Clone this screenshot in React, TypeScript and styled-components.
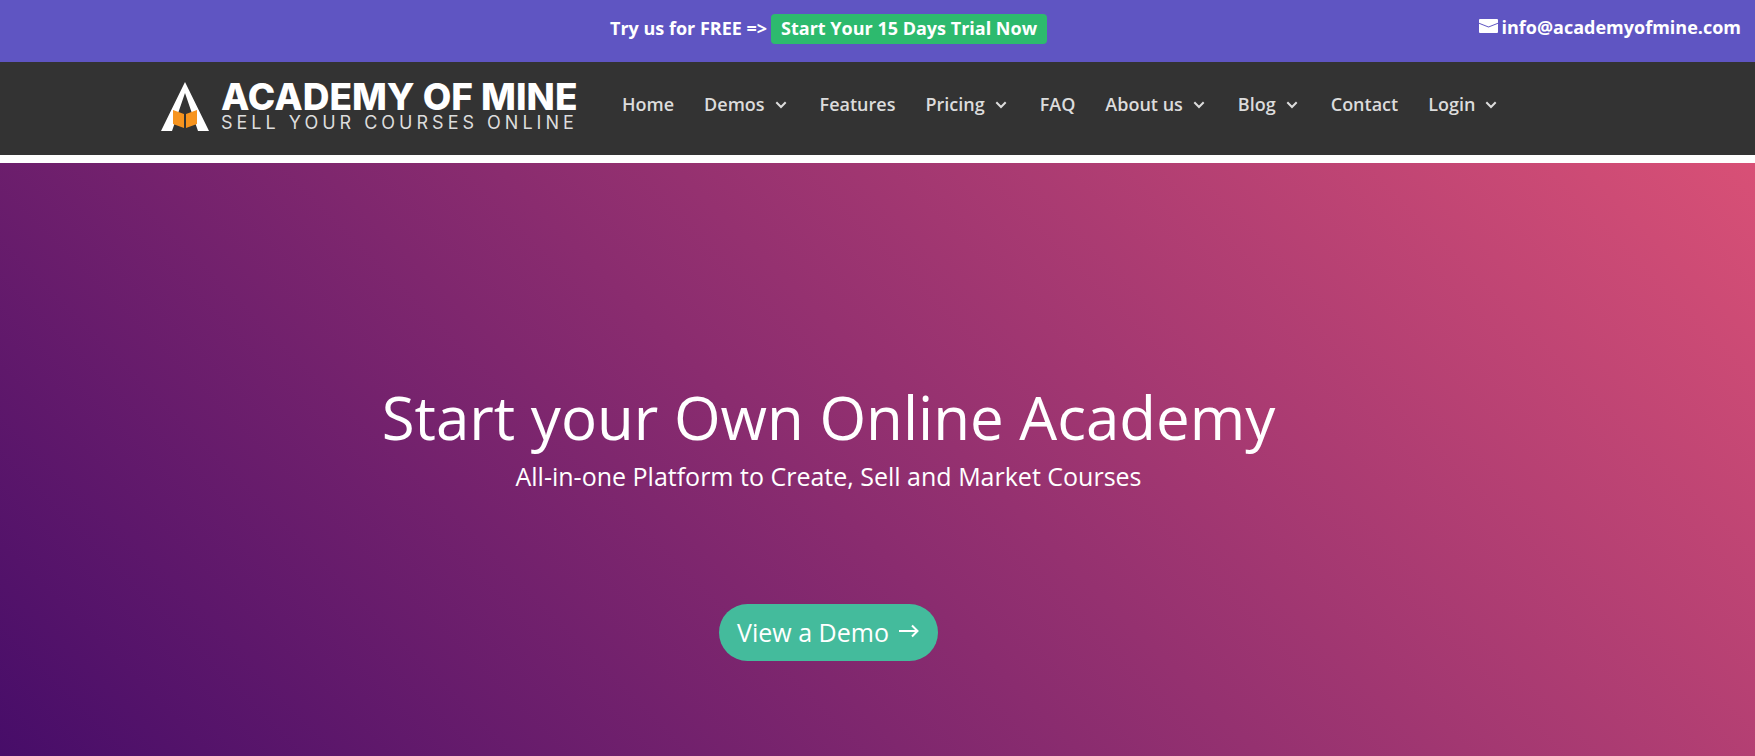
import React from "react";
import styled, { createGlobalStyle } from "styled-components";

const GlobalStyle = createGlobalStyle`
  * { box-sizing: border-box; }
  html, body, #root { height: 100%; }
  body {
    margin: 0;
    background: #fff;
    color: #fff;
    font-family: "Open Sans", "Liberation Sans", sans-serif;
  }
  a { color: inherit; text-decoration: none; }
`;

const Page = styled.div`
  display: flex;
  flex-direction: column;
  min-height: 100%;
`;

const TopBar = styled.div`
  display: grid;
  grid-template-columns: 1fr auto 1fr;
  align-items: start;
  padding: 14px 14px 18px 0;
  background: #5f55c2;
  font-size: 18px;
  font-weight: 700;
`;

const Promo = styled.p`
  grid-column: 2;
  display: flex;
  gap: 4px;
  margin: 0 84px 0 0;
  line-height: 28px;
`;

const TrialLink = styled.a`
  padding: 0 10px 2px;
  border-radius: 4px;
  background: #2dba6e;
`;

const MailLink = styled.a`
  display: flex;
  align-items: center;
  justify-content: flex-end;
  gap: 4px;
  line-height: 26px;
`;

const MailIcon = styled.svg`
  margin-bottom: 2px;
`;

const Header = styled.header`
  display: flex;
  gap: 46px;
  min-height: 93px;
  padding: 20px 0 0 161px;
  background: #333;
`;

const Logo = styled.a`
  display: flex;
  flex: none;
  gap: 12px;
`;

const Wordmark = styled.span`
  display: flex;
  flex-direction: column;
  width: 355px;
  font-family: Inter, "Liberation Sans", sans-serif;
  white-space: nowrap;
`;

const BrandName = styled.span`
  font-size: 37px;
  font-weight: 800;
  line-height: 30px;
`;

const Tagline = styled.span`
  color: #ddd;
  font-size: 18px;
  line-height: 22px;
  letter-spacing: 4px;
`;

const Menu = styled.ul`
  display: flex;
  gap: 30px;
  margin: 0;
  padding: 8px 0 0;
  list-style: none;
`;

const MenuLink = styled.a`
  display: flex;
  align-items: center;
  gap: 10px;
  color: #dcdcdc;
  font-size: 18px;
  font-weight: 600;
  line-height: 28px;
  white-space: nowrap;
`;

const ChevronSvg = styled.svg`
  margin: 2px 3px 0 0;
`;

const Hero = styled.main`
  display: flex;
  flex: 1;
  flex-direction: column;
  align-items: center;
  margin-top: 8px;
  padding: 212px 98px 95px 0;
  background: linear-gradient(45deg, #470d69 0%, #d85076 100%);
`;

const Title = styled.h1`
  margin: 0;
  font-size: 60px;
  font-weight: 400;
  line-height: 84px;
`;

const Subtitle = styled.p`
  margin: 0;
  font-size: 25px;
  line-height: 34px;
`;

const DemoLink = styled.a`
  display: flex;
  align-items: center;
  gap: 10px;
  margin-top: 111px;
  padding: 0 19px 0 18px;
  border-radius: 29px;
  background: #44bb9c;
  font-size: 25px;
  line-height: 57px;
`;

const ArrowIcon = styled.svg`
  margin-bottom: 4px;
`;

const Chevron = () => (
  <ChevronSvg width="12" height="8" viewBox="0 0 12 8" fill="none" stroke="currentColor" strokeWidth="2" aria-hidden="true">
    <path d="M1.300 1.200 6 6l4.700-4.800" />
  </ChevronSvg>
);

const items = [
  { label: "Home" },
  { label: "Demos", menu: true },
  { label: "Features" },
  { label: "Pricing", menu: true },
  { label: "FAQ" },
  { label: "About us", menu: true },
  { label: "Blog", menu: true },
  { label: "Contact" },
  { label: "Login", menu: true },
];

export default function App() {
  return (
    <>
      <GlobalStyle />
      <Page>
        <TopBar>
          <Promo>
            Try us for FREE =&gt; <TrialLink href="#trial">Start Your 15 Days Trial Now</TrialLink>
          </Promo>
          <MailLink href="mailto:info@academyofmine.com">
            <MailIcon width="19" height="14" viewBox="0 0 19 14" aria-hidden="true">
              <path fill="#fff" d="M1 0h17q1 0 1 1v2.800L9.500 7.400 0 3.800V1q0-1 1-1zM0 4.800l9.500 3.600L19 4.800V13q0 1-1 1H1q-1 0-1-1z" />
            </MailIcon>
            info@academyofmine.com
          </MailLink>
        </TopBar>
        <Header>
          <Logo href="#home">
            <svg width="48" height="49" viewBox="0 0 48 49" aria-hidden="true">
              <path fill="#fff" d="M24 0 48 49H37L24 11 11 49H0z" />
              <path fill="#f7941e" d="M12 28l11 4v14l-11-4zM36 28l-11 4v14l11-4z" />
            </svg>
            <Wordmark>
              <BrandName>ACADEMY OF MINE</BrandName>
              <Tagline>SELL YOUR COURSES ONLINE</Tagline>
            </Wordmark>
          </Logo>
          <nav aria-label="Main">
            <Menu>
              {items.map(({ label, menu }) => (
                <li key={label}>
                  <MenuLink href="#">
                    {label}
                    {menu && <Chevron />}
                  </MenuLink>
                </li>
              ))}
            </Menu>
          </nav>
        </Header>
        <Hero>
          <Title>Start your Own Online Academy</Title>
          <Subtitle>All-in-one Platform to Create, Sell and Market Courses</Subtitle>
          <DemoLink href="#demo">
            View a Demo
            <ArrowIcon width="20" height="14" viewBox="0 0 20 14" fill="none" stroke="#fff" strokeWidth="2" aria-hidden="true">
              <path d="M0 7h18M13 1.500 18.500 7 13 12.500" />
            </ArrowIcon>
          </DemoLink>
        </Hero>
      </Page>
    </>
  );
}
